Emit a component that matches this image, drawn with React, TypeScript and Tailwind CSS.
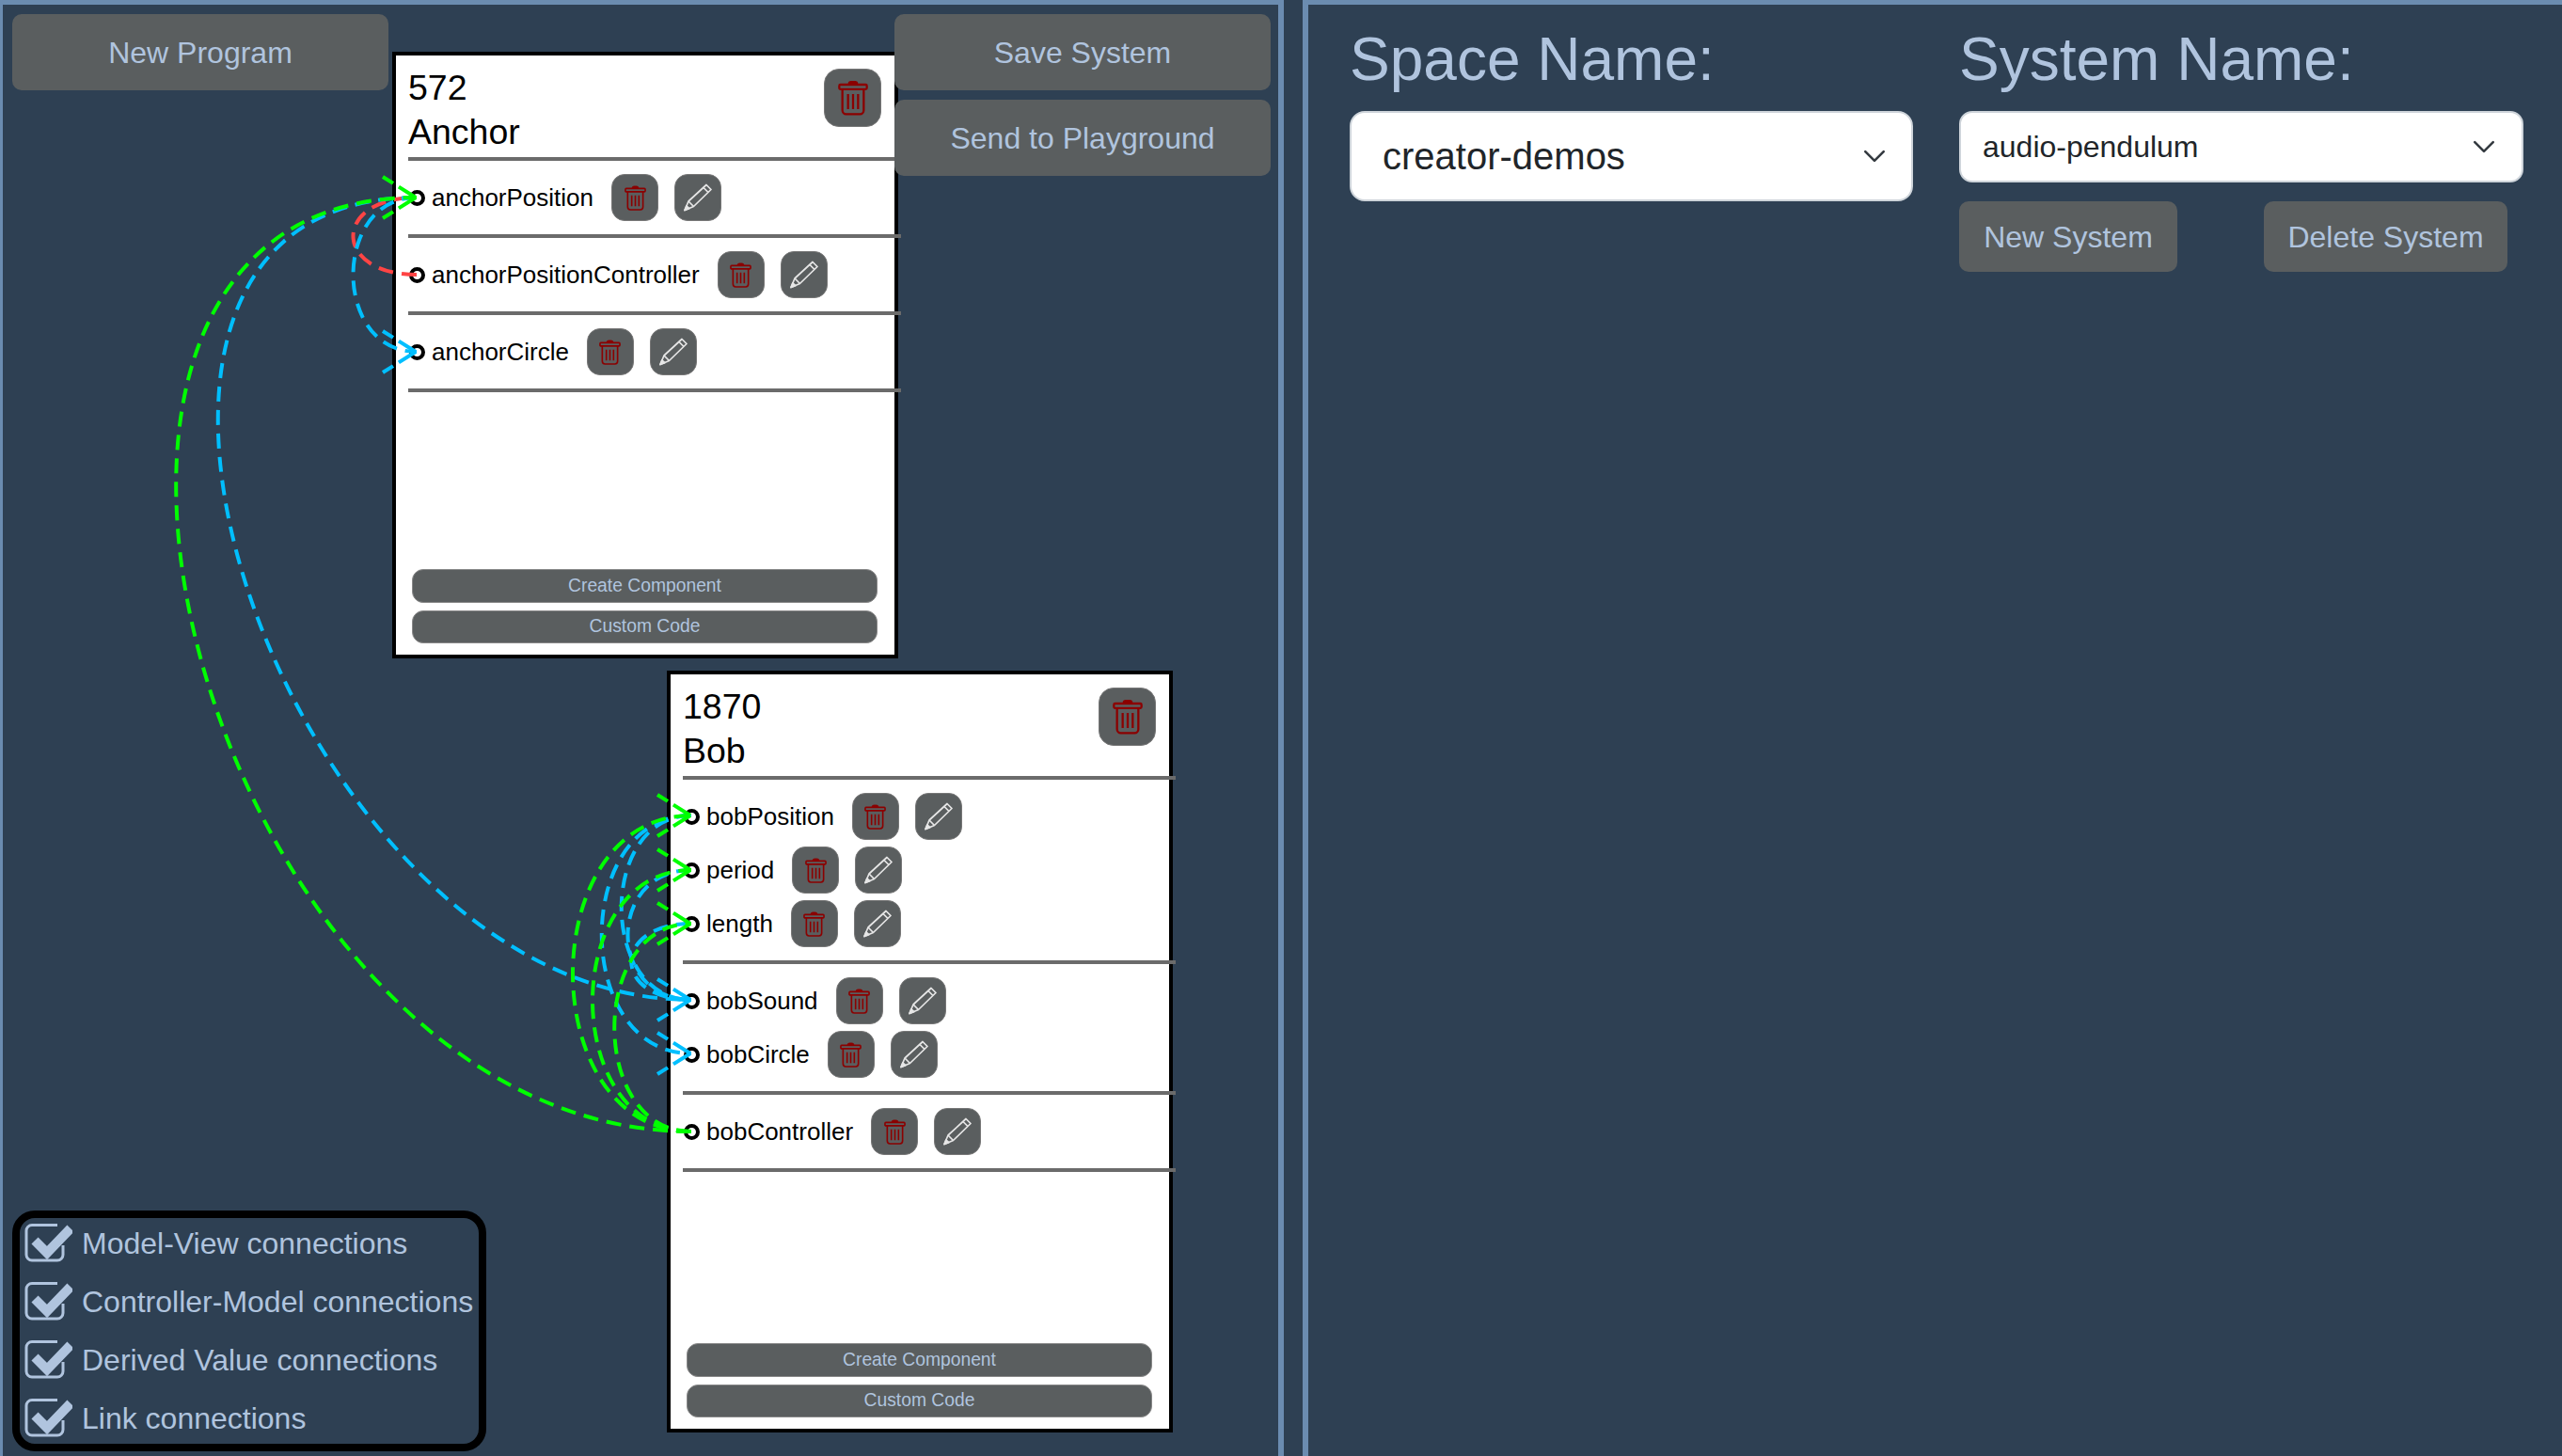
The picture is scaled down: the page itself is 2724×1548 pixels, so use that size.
import React from 'react';

type Wire = { color: string; x1: number; y1: number; x2: number; y2: number; d1: number; d2: number };

const GREEN = '#00ff00';
const BLUE = '#00bfff';
const RED = '#ff4444';

const wires: Wire[] = [
  { color: RED, x1: 443, y1: 292, x2: 443, y2: 210, d1: 90, d2: 90 },
  { color: BLUE, x1: 443, y1: 210, x2: 443, y2: 374, d1: 90, d2: 90 },
  { color: BLUE, x1: 443, y1: 210, x2: 735, y2: 1063, d1: 430, d2: 430 },
  { color: GREEN, x1: 735, y1: 1203, x2: 443, y2: 210, d1: 512, d2: 485 },
  { color: BLUE, x1: 735, y1: 867, x2: 735, y2: 1063, d1: 99, d2: 99 },
  { color: BLUE, x1: 735, y1: 867, x2: 735, y2: 1120, d1: 127, d2: 127 },
  { color: BLUE, x1: 735, y1: 925, x2: 735, y2: 1063, d1: 90, d2: 90 },
  { color: BLUE, x1: 735, y1: 982, x2: 735, y2: 1063, d1: 85, d2: 85 },
  { color: GREEN, x1: 735, y1: 1203, x2: 735, y2: 867, d1: 168, d2: 168 },
  { color: GREEN, x1: 735, y1: 1203, x2: 735, y2: 925, d1: 140, d2: 140 },
  { color: GREEN, x1: 735, y1: 1203, x2: 735, y2: 982, d1: 109, d2: 109 },
];

const heads: { color: string; x: number; y: number }[] = [
  { color: BLUE, x: 442, y: 374 },
  { color: GREEN, x: 442, y: 210 },
  { color: BLUE, x: 734, y: 1063 },
  { color: BLUE, x: 734, y: 1120 },
  { color: GREEN, x: 734, y: 867 },
  { color: GREEN, x: 734, y: 925 },
  { color: GREEN, x: 734, y: 982 },
];

function Wires() {
  return (
    <svg
      className="absolute left-0 top-0 z-10 pointer-events-none"
      width={1356}
      height={1543}
      viewBox="3 5 1356 1543"
      fill="none"
    >
      {wires.map((w, i) => (
        <path
          key={i}
          d={`M${w.x1} ${w.y1} C${w.x1 - w.d1} ${w.y1} ${w.x2 - w.d2} ${w.y2} ${w.x2} ${w.y2}`}
          stroke={w.color}
          strokeWidth={4}
          strokeDasharray="16 9"
        />
      ))}
      {heads.map((h, i) => (
        <g key={i} stroke={h.color} strokeWidth={4} strokeDasharray="13 7 30">
          <path d={`M${h.x - 35} ${h.y - 22} L${h.x} ${h.y}`} />
          <path d={`M${h.x - 35} ${h.y + 22} L${h.x} ${h.y}`} />
        </g>
      ))}
    </svg>
  );
}

function TrashIcon({ className }: { className: string }) {
  return (
    <svg className={className} viewBox="0 0 24 28" fill="none" stroke="#8b0000" strokeWidth={1.7}>
      <path d="M8.5 3 Q8.5 1 10.5 1 H13.5 Q15.5 1 15.5 3 Z" fill="#8b0000" strokeWidth={1} />
      <rect x="1" y="3.5" width="22" height="3.6" rx="1" />
      <path d="M3.5 7 V24 A3 3 0 0 0 6.5 27 H17.5 A3 3 0 0 0 20.5 24 V7" />
      <path d="M8 11 V23 M12 11 V23 M16 11 V23" />
    </svg>
  );
}

function PencilIcon() {
  return (
    <svg className="w-[30px] h-[30px]" viewBox="0 0 30 30" fill="none" stroke="#e6e6e6" strokeWidth={1.7} strokeLinejoin="round">
      <path d="M1 28.5 L5 19 L24 1.5 L29 6.5 L10.5 24.5 Z" />
      <path d="M5 19 L10.5 24.5" />
      <path d="M21 4.5 L26 9.5" />
      <path d="M1 28.5 L2.8 24 L5.8 26.7 Z" fill="#e6e6e6" />
    </svg>
  );
}

function CheckIcon() {
  return (
    <svg className="w-[52px] h-[44px] shrink-0" viewBox="0 0 52 44" fill="none">
      <path
        d="M36 2.5 H9 A6 6 0 0 0 3 8.5 V34 A6 6 0 0 0 9 40 H36 A6 6 0 0 0 42 34 V24"
        stroke="#b0c4de"
        strokeWidth={3}
      />
      <path d="M12 19 L25 32 L50 6" stroke="#b0c4de" strokeWidth={10} />
    </svg>
  );
}

function Chevron() {
  return (
    <svg className="w-[26px] h-[26px]" viewBox="0 0 16 16" fill="none" stroke="#343a40" strokeWidth={1.6} strokeLinecap="round" strokeLinejoin="round">
      <path d="M2 5 L8 11 L14 5" />
    </svg>
  );
}

function Row({ name }: { name: string }) {
  return (
    <div className="flex items-center h-[50px] pl-[14px]">
      <span className="w-[17px] h-[17px] rounded-full border-[4px] border-black shrink-0" />
      <span className="ml-[7px] text-[26px] text-black leading-none">{name}</span>
      <button className="ml-[19px] w-[50px] h-[50px] rounded-[14px] bg-[#5a5e5f] border border-[#777] flex items-center justify-center">
        <TrashIcon className="w-[23px] h-[27px]" />
      </button>
      <button className="ml-[17px] w-[50px] h-[50px] rounded-[14px] bg-[#5a5e5f] border border-[#777] flex items-center justify-center">
        <PencilIcon />
      </button>
    </div>
  );
}

function Divider() {
  return <div className="ml-[13px] w-[524px] h-[4px] bg-[#6b6b6b]" />;
}

function Card({ id, title, groups, className }: { id: string; title: string; groups: string[][]; className: string }) {
  return (
    <div className={`absolute border-[4px] border-black bg-white flex flex-col ${className}`}>
      <div className="h-[108px] flex justify-between items-start pt-[11px] pl-[13px] pr-[14px]">
        <div className="text-[37.5px] leading-[47px] text-black">
          <div>{id}</div>
          <div>{title}</div>
        </div>
        <button className="mt-[3px] w-[61px] h-[62px] rounded-[16px] bg-[#5a5e5f] border border-[#777] flex items-center justify-center">
          <TrashIcon className="w-[32px] h-[38px]" />
        </button>
      </div>
      <Divider />
      {groups.map((group) => (
        <React.Fragment key={group[0]}>
          <div className="flex flex-col gap-[7px] py-[14px]">
            {group.map((name) => (
              <Row key={name} name={name} />
            ))}
          </div>
          <Divider />
        </React.Fragment>
      ))}
      <div className="mt-auto flex flex-col gap-[8px] pl-[17px] pb-[12px]">
        <button className="w-[495px] h-[36px] rounded-[12px] bg-[#5a5e5f] border border-[#888] text-[19.3px] text-[#b0c4de]">
          Create Component
        </button>
        <button className="w-[495px] h-[35px] rounded-[12px] bg-[#5a5e5f] border border-[#888] text-[19.3px] text-[#b0c4de]">
          Custom Code
        </button>
      </div>
    </div>
  );
}

const bigButton = 'w-[400px] h-[81px] rounded-[10px] bg-[#5a5e5f] text-[32px] text-[#b0c4de]';
const connectionTypes = ['Model-View connections', 'Controller-Model connections', 'Derived Value connections', 'Link connections'];

export default function App() {
  return (
    <div className="flex w-[2724px] h-[1548px] overflow-hidden bg-[#2e4053] font-['Liberation_Sans',Arial,sans-serif]">
      {/* Program canvas */}
      <div className="relative w-[1365px] h-full overflow-hidden border-t-[5px] border-l-[3px] border-r-[6px] border-[#6b8cb0]">
        <div className="relative z-20 flex justify-between pt-[10px] pl-[10px] pr-[8px]">
          <button className={bigButton}>New Program</button>
          <div className="flex flex-col gap-[10px]">
            <button className={bigButton}>Save System</button>
            <button className={bigButton}>Send to Playground</button>
          </div>
        </div>

        <Card
          id="572"
          title="Anchor"
          groups={[['anchorPosition'], ['anchorPositionController'], ['anchorCircle']]}
          className="left-[414px] top-[50px] w-[538px] h-[645px]"
        />
        <Card
          id="1870"
          title="Bob"
          groups={[['bobPosition', 'period', 'length'], ['bobSound', 'bobCircle'], ['bobController']]}
          className="left-[706px] top-[708px] w-[538px] h-[810px]"
        />

        <Wires />

        <div className="absolute left-[10px] bottom-[5px] z-20 w-[504px] h-[256px] border-[8px] border-black rounded-[24px] flex flex-col gap-[8px]">
          {connectionTypes.map((label) => (
            <div key={label} className="flex items-center h-[54px] pl-[4px]">
              <CheckIcon />
              <span className="ml-[10px] text-[32px] text-[#b0c4de] whitespace-nowrap">{label}</span>
            </div>
          ))}
        </div>
      </div>

      <div className="w-[20px] shrink-0" />

      {/* Space and system pickers */}
      <div className="flex-1 h-full border-t-[5px] border-l-[6px] border-[#6b8cb0] pt-[20px] pl-[44px] flex gap-[49px]">
        <div className="w-[599px]">
          <h2 className="text-[64px] leading-[77px] text-[#b0c4de] mb-[16px]">Space Name:</h2>
          <div className="h-[96px] rounded-[16px] bg-white border-2 border-[#ced4da] pl-[33px] pr-[26px] flex items-center justify-between">
            <span className="text-[40px] text-[#212529]">creator-demos</span>
            <Chevron />
          </div>
        </div>
        <div className="w-[600px]">
          <h2 className="text-[64px] leading-[77px] text-[#b0c4de] mb-[16px]">System Name:</h2>
          <div className="h-[76px] rounded-[14px] bg-white border-2 border-[#ced4da] pl-[23px] pr-[27px] flex items-center justify-between">
            <span className="text-[32px] text-[#212529]">audio-pendulum</span>
            <Chevron />
          </div>
          <div className="flex gap-[92px] mt-[20px]">
            <button className="w-[232px] h-[75px] rounded-[10px] bg-[#5a5e5f] text-[32px] text-[#b0c4de]">New System</button>
            <button className="w-[259px] h-[75px] rounded-[10px] bg-[#5a5e5f] text-[32px] text-[#b0c4de]">Delete System</button>
          </div>
        </div>
      </div>
    </div>
  );
}
